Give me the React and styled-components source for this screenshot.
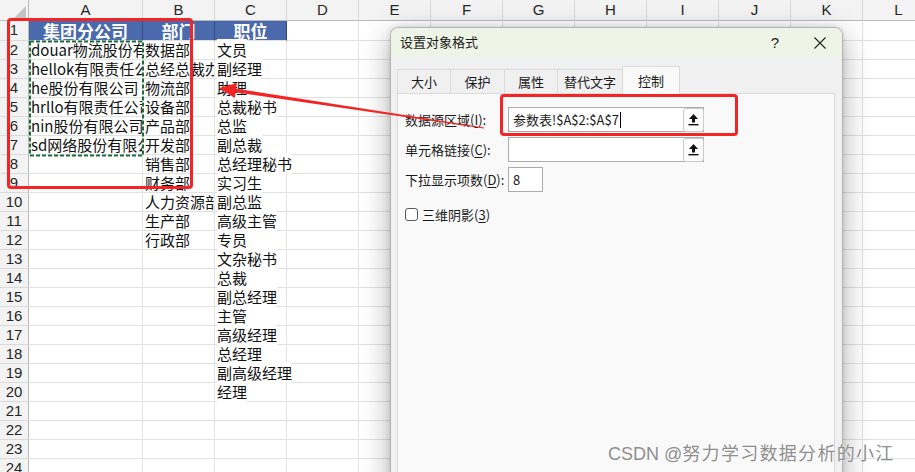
import React from 'react';
import styled, { createGlobalStyle } from 'styled-components';

const GlobalStyle = createGlobalStyle`
  html, body { margin: 0; padding: 0; background: #fff; overflow: hidden; }
  body { font-family: "Noto Sans CJK SC", "Noto Sans", sans-serif; }
  * { box-sizing: border-box; }
`;

const Page = styled.div`
  position: relative;
  width: 915px;
  height: 472px;
  overflow: hidden;
  background: #fff;
`;

const Sheet = styled.div`
  display: grid;
  grid-template-columns: 29px 114px repeat(11, 72px);
  grid-template-rows: 21px 20px;
  grid-auto-rows: 19px;
`;

const Corner = styled.div`
  position: relative;
  background: #f3f3f3;
  border-right: 1px solid #b9b9b9;
  border-bottom: 1px solid #b9b9b9;
  &::after {
    content: '';
    position: absolute;
    right: 2px;
    bottom: 2px;
    width: 0;
    height: 0;
    border-left: 12px solid transparent;
    border-bottom: 12px solid #c4c4c4;
  }
`;

const ColHead = styled.div`
  background: #f3f3f3;
  border-right: 1px solid #d6d6d6;
  border-bottom: 1px solid #b9b9b9;
  font-family: "Liberation Sans", Arial, sans-serif;
  font-size: 15px;
  line-height: 20px;
  color: #262626;
  text-align: center;
`;

const RowHead = styled.div`
  background: #f3f3f3;
  border-right: 1px solid #b9b9b9;
  border-bottom: 1px solid #dadada;
  font-family: "Liberation Sans", Arial, sans-serif;
  font-size: 15px;
  line-height: 18px;
  color: #262626;
  text-align: center;
`;

const Cell = styled.div`
  border-right: 1px solid #e1e1e1;
  border-bottom: 1px solid #e1e1e1;
  font-size: 15px;
  line-height: 18px;
  color: #111;
  white-space: nowrap;
  overflow-x: ${(p) => (p.$clip ? 'clip' : 'visible')};
  overflow-y: visible;
  padding-left: 2px;
`;

const CellText = styled.span`
  position: relative;
  z-index: 1;
  background: #fff;
`;

const TitleCell = styled.div`
  background: #4a6aad;
  border-right: 1px solid #2f4c85;
  border-bottom: 1px solid #e1e1e1;
  color: #fff;
  font-weight: 700;
  font-size: 17px;
  line-height: 19px;
  text-align: center;
  white-space: nowrap;
  overflow: visible;
`;

const Marquee = styled.svg`
  position: absolute;
  left: 29px;
  top: 40px;
  pointer-events: none;
`;

const RedFrame = styled.div`
  position: absolute;
  left: ${(p) => p.$x}px;
  top: ${(p) => p.$y}px;
  width: ${(p) => p.$w}px;
  height: ${(p) => p.$h}px;
  border: 3px solid #f42424;
  border-radius: 4px;
  pointer-events: none;
  z-index: 5;
`;

const Dialog = styled.div`
  position: absolute;
  left: 390px;
  top: 27px;
  width: 453px;
  height: 470px;
  background: #f0f0f0;
  border: 1px solid #b5b5b5;
  border-radius: 8px 8px 0 0;
  box-shadow: 0 8px 28px rgba(0, 0, 0, 0.32), 0 0 5px rgba(0, 0, 0, 0.12);
  display: flex;
  flex-direction: column;
  font-size: 13px;
  color: #1a1a1a;
  z-index: 3;
`;

const TitleBar = styled.div`
  height: 29px;
  background: #eef5e6;
  border-radius: 8px 8px 0 0;
  display: flex;
  align-items: center;
  padding-left: 9px;
  padding-right: 2px;
  gap: 5px;
`;

const TitleText = styled.div`
  flex: 1;
  font-size: 13px;
  margin-top: -2px;
`;

const TitleButton = styled.div`
  width: 40px;
  height: 29px;
  display: flex;
  align-items: center;
  justify-content: center;
  font-family: "Liberation Sans", Arial, sans-serif;
  font-size: 15px;
  color: #222;
`;

const Body = styled.div`
  flex: 1;
  display: flex;
  flex-direction: column;
  padding: 9px 7px 0 6px;
`;

const TabRow = styled.div`
  display: flex;
  align-items: flex-end;
  height: 27px;
`;

const Tab = styled.div`
  width: ${(p) => p.$w}px;
  height: ${(p) => (p.$active ? 28 : 24)}px;
  margin-bottom: ${(p) => (p.$active ? -1 : 0)}px;
  background: ${(p) => (p.$active ? '#f9f9f9' : '#f0f0f0')};
  border: 1px solid #dadada;
  border-bottom: none;
  margin-left: -1px;
  display: flex;
  align-items: center;
  justify-content: center;
  font-size: 13px;
  position: relative;
  z-index: ${(p) => (p.$active ? 1 : 0)};
  &:first-child { margin-left: 0; }
`;

const Panel = styled.div`
  flex: 1;
  background: #f9f9f9;
  border: 1px solid #dadada;
  padding: 13px 0 0 7px;
  display: flex;
  flex-direction: column;
  gap: 5px;
`;

const FormRow = styled.div`
  display: grid;
  grid-template-columns: 103px auto;
  align-items: center;
  height: 25px;
`;

const Label = styled.div`
  font-size: 13px;
  white-space: nowrap;
  u { text-underline-offset: 2px; }
`;

const Field = styled.div`
  width: ${(p) => p.$w}px;
  height: 25px;
  background: #fff;
  border: 1px solid #ababab;
  display: flex;
  align-items: center;
  padding-left: 4px;
  font-size: 13px;
  font-family: "Noto Sans CJK SC", "Noto Sans", sans-serif;
`;

const Caret = styled.span`
  display: inline-block;
  width: 1px;
  height: 16px;
  background: #000;
  margin-left: 1px;
`;

const PickButton = styled.div`
  margin-left: auto;
  margin-right: -1px;
  width: 21px;
  height: 24px;
  border: 1px solid #cacaca;
  border-radius: 3px;
  background: #fdfdfd;
  display: flex;
  align-items: center;
  justify-content: center;
`;

const CheckRow = styled.div`
  display: flex;
  align-items: center;
  gap: 4px;
  margin-top: 8px;
  font-size: 13px;
  u { text-underline-offset: 2px; }
`;

const CheckBox = styled.div`
  width: 13px;
  height: 13px;
  border: 1px solid #5a5a5a;
  border-radius: 3px;
  background: #fff;
`;

const ArrowLayer = styled.svg`
  position: absolute;
  left: 0;
  top: 0;
  pointer-events: none;
  z-index: 6;
`;

const Watermark = styled.div`
  position: absolute;
  left: 608px;
  top: 439px;
  font-size: 18px;
  letter-spacing: 1.3px;
  color: #8e8e8e;
  text-shadow: 0 0 2px #fff;
  white-space: nowrap;
  z-index: 7;
  font-family: "Noto Sans CJK SC", "Liberation Sans", sans-serif;
  span { font-family: "Liberation Sans", Arial, sans-serif; letter-spacing: 0; }
`;

const colA = ['集团分公司', 'douar物流股份有限公司', 'hellok有限责任公司', 'he股份有限公司', 'hrllo有限责任公司', 'nin股份有限公司', 'sd网络股份有限公司'];
const colB = ['部门', '数据部', '总经总裁办', '物流部', '设备部', '产品部', '开发部', '销售部', '财务部', '人力资源部', '生产部', '行政部'];
const colC = ['职位', '文员', '副经理', '助理', '总裁秘书', '总监', '副总裁', '总经理秘书', '实习生', '副总监', '高级主管', '专员', '文杂秘书', '总裁', '副总经理', '主管', '高级经理', '总经理', '副高级经理', '经理'];
const letters = ['A', 'B', 'C', 'D', 'E', 'F', 'G', 'H', 'I', 'J', 'K', 'L'];
const ROWS = 24;

function UpIcon() {
  return (
    <svg width="11" height="13" viewBox="0 0 11 13">
      <path d="M5.5 1 L10 6 H7 V9.5 H4 V6 H1 Z" fill="#111" />
      <rect x="0.5" y="11" width="10" height="1.4" fill="#111" />
    </svg>
  );
}

function CloseIcon() {
  return (
    <svg width="12" height="12" viewBox="0 0 12 12">
      <path d="M0.5 0.5 L11.5 11.5 M11.5 0.5 L0.5 11.5" stroke="#222" strokeWidth="1.1" fill="none" />
    </svg>
  );
}

export default function App() {
  const rows = [];
  for (let r = 1; r <= ROWS; r++) {
    rows.push(<RowHead key={`h${r}`}>{r}</RowHead>);
    if (r === 1) {
      rows.push(<TitleCell key="a1">{colA[0]}</TitleCell>);
      rows.push(<TitleCell key="b1">{colB[0]}</TitleCell>);
      rows.push(<TitleCell key="c1">{colC[0]}</TitleCell>);
    } else {
      const a = colA[r - 1];
      const b = colB[r - 1];
      const c = colC[r - 1];
      rows.push(<Cell key={`a${r}`} $clip>{a}</Cell>);
      rows.push(<Cell key={`b${r}`} $clip>{b}</Cell>);
      rows.push(<Cell key={`c${r}`}>{c ? <CellText>{c}</CellText> : null}</Cell>);
    }
    for (let c = 3; c < 12; c++) rows.push(<Cell key={`x${r}-${c}`} />);
  }

  const tip = [219, 88];
  const tail = [484, 128];
  const dx = tail[0] - tip[0];
  const dy = tail[1] - tip[1];
  const len = Math.hypot(dx, dy);
  const ux = dx / len;
  const uy = dy / len;
  const px = -uy;
  const py = ux;
  const headL = 17;
  const headW = 7.5;
  const bx = tip[0] + ux * headL;
  const by = tip[1] + uy * headL;
  const head = `${tip[0]},${tip[1]} ${bx + px * headW},${by + py * headW} ${bx - px * headW},${by - py * headW}`;
  const s0 = 1.8;
  const s1 = 0.6;
  const sx = bx - ux * 1;
  const sy = by - uy * 1;
  const shaft = `${sx + px * s0},${sy + py * s0} ${tail[0] + px * s1},${tail[1] + py * s1} ${tail[0] - px * s1},${tail[1] - py * s1} ${sx - px * s0},${sy - py * s0}`;

  return (
    <Page>
      <GlobalStyle />
      <Sheet>
        <Corner />
        {letters.map((l) => (
          <ColHead key={l}>{l}</ColHead>
        ))}
        {rows}
      </Sheet>

      <Marquee width="116" height="117" viewBox="0 0 116 117">
        <rect x="1" y="1.5" width="113" height="114" fill="none" stroke="#1d6a3c" strokeWidth="2" strokeDasharray="4 2" />
      </Marquee>

      <RedFrame $x={7} $y={18} $w={186} $h={171} />

      <Dialog>
        <TitleBar>
          <TitleText>设置对象格式</TitleText>
          <TitleButton>?</TitleButton>
          <TitleButton>
            <CloseIcon />
          </TitleButton>
        </TitleBar>
        <Body>
          <TabRow>
            <Tab $w={54}>大小</Tab>
            <Tab $w={55}>保护</Tab>
            <Tab $w={54}>属性</Tab>
            <Tab $w={66}>替代文字</Tab>
            <Tab $w={58} $active>控制</Tab>
          </TabRow>
          <Panel>
            <FormRow>
              <Label>
                数据源区域(<u>I</u>):
              </Label>
              <Field $w={196}>
                参数表!$A$2:$A$7
                <Caret />
                <PickButton>
                  <UpIcon />
                </PickButton>
              </Field>
            </FormRow>
            <FormRow>
              <Label>
                单元格链接(<u>C</u>):
              </Label>
              <Field $w={196}>
                <PickButton>
                  <UpIcon />
                </PickButton>
              </Field>
            </FormRow>
            <FormRow>
              <Label>
                下拉显示项数(<u>D</u>):
              </Label>
              <Field $w={35}>8</Field>
            </FormRow>
            <CheckRow>
              <CheckBox />
              <span>
                三维阴影(<u>3</u>)
              </span>
            </CheckRow>
          </Panel>
        </Body>
      </Dialog>

      <RedFrame $x={500} $y={94} $w={238} $h={42} />

      <ArrowLayer width="915" height="472" viewBox="0 0 915 472">
        <polygon points={shaft} fill="#f42424" />
        <polygon points={head} fill="#f42424" />
      </ArrowLayer>

      <Watermark>
        <span>CSDN @</span>努力学习数据分析的小江
      </Watermark>
    </Page>
  );
}
